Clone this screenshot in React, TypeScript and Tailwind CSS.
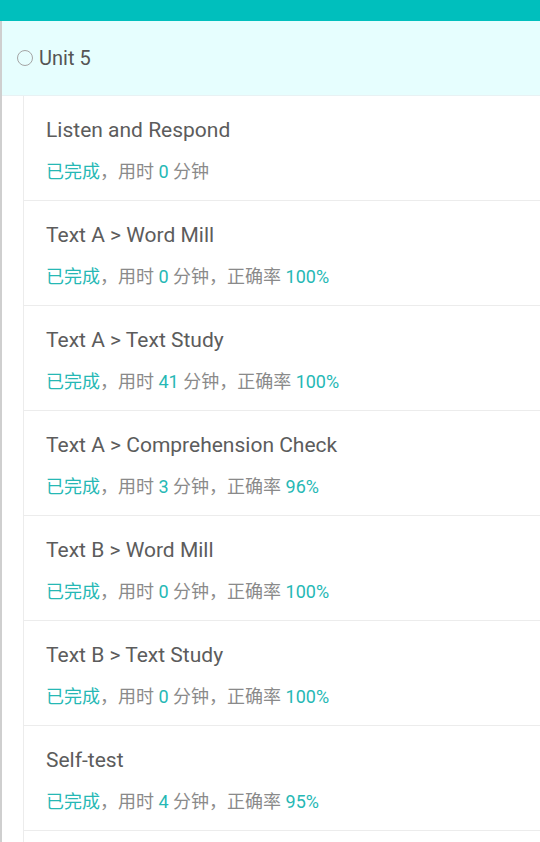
import React from 'react'

type Item = { title: string; minutes: number; rate?: string }

const items: Item[] = [
  { title: 'Listen and Respond', minutes: 0 },
  { title: 'Text A > Word Mill', minutes: 0, rate: '100%' },
  { title: 'Text A > Text Study', minutes: 41, rate: '100%' },
  { title: 'Text A > Comprehension Check', minutes: 3, rate: '96%' },
  { title: 'Text B > Word Mill', minutes: 0, rate: '100%' },
  { title: 'Text B > Text Study', minutes: 0, rate: '100%' },
  { title: 'Self-test', minutes: 4, rate: '95%' },
]

function Row({ item }: { item: Item }) {
  return (
    <div className="h-[105px] border-b border-[#ececec] pl-[22px] pt-[20px]">
      <div className="text-[21px] leading-[28px] text-[#5c5c5c]">{item.title}</div>
      <div className="mt-[16px] text-[18px] leading-[24px] text-[#8a8a8a]">
        <span className="text-[#26b8b5]">已完成</span>，用时{' '}
        <span className="text-[#26b8b5]">{item.minutes}</span> 分钟
        {item.rate && (
          <>
            ，正确率 <span className="text-[#26b8b5]">{item.rate}</span>
          </>
        )}
      </div>
    </div>
  )
}

export default function App() {
  return (
    <div
      className="h-[842px] w-[540px] overflow-hidden bg-white"
      style={{ fontFamily: 'Roboto, "Noto Sans CJK SC", sans-serif' }}
    >
      <div className="h-[21px] bg-[#00bfbd]" />
      <div className="border-l-2 border-[#cfcfcf]">
        <div className="flex h-[75px] items-center border-b border-[#e8f2f4] bg-[#e6fefe] pl-[15px]">
          <span className="mr-[6px] h-[16px] w-[16px] rounded-full border-[1.5px] border-[#a5a5a5]" />
          <span className="text-[20px] text-[#555]">Unit 5</span>
        </div>
        <div className="ml-[21px] border-l border-[#ececec]">
          {items.map((it) => (
            <Row key={it.title} item={it} />
          ))}
          <div className="h-[20px]" />
        </div>
      </div>
    </div>
  )
}
